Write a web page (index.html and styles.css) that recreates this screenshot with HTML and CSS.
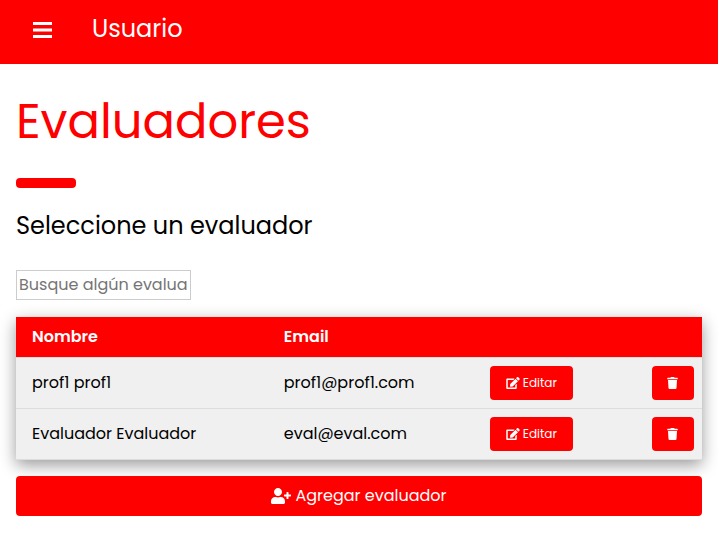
FILE: index.html
```html
<!DOCTYPE html>
<html lang="es">
<head>
<meta charset="utf-8">
<meta name="viewport" content="width=device-width, initial-scale=1">
<title>Evaluadores</title>
<link rel="stylesheet" href="styles.css">
</head>
<body>
<svg class="sprite" aria-hidden="true">
  <symbol id="edit" viewBox="0 0 576 512"><path d="M402.600 83.200l90.200 90.200c3.800 3.800 3.800 10 0 13.800L274.400 405.600l-92.800 10.300c-12.400 1.400-22.900-9.100-21.500-21.500l10.300-92.800L388.800 83.200c3.800-3.800 10-3.800 13.800 0zm162-22.900l-48.800-48.800c-15.200-15.200-39.900-15.200-55.200 0l-35.400 35.400c-3.800 3.800-3.800 10 0 13.800l90.200 90.200c3.800 3.800 10 3.800 13.800 0l35.400-35.400c15.200-15.300 15.200-40 0-55.200zM384 346.200V448H64V128h229.800c3.200 0 6.200-1.300 8.500-3.500l40-40c7.600-7.600 2.200-20.500-8.500-20.500H48C21.500 64 0 85.500 0 112v352c0 26.500 21.500 48 48 48h352c26.500 0 48-21.500 48-48V306.200c0-10.700-12.900-16-20.500-8.500l-40 40c-2.200 2.300-3.500 5.300-3.500 8.500z"/></symbol>
  <symbol id="trash" viewBox="0 0 448 512"><path d="M432 32H312l-9.400-18.700A24 24 0 0 0 281.100 0H166.800a23.700 23.700 0 0 0-21.400 13.300L136 32H16A16 16 0 0 0 0 48v32a16 16 0 0 0 16 16h416a16 16 0 0 0 16-16V48a16 16 0 0 0-16-16zM53.200 467a48 48 0 0 0 47.900 45h245.800a48 48 0 0 0 47.900-45L416 128H32z"/></symbol>
  <symbol id="user-plus" viewBox="0 0 640 512"><path d="M624 208h-64v-64c0-8.800-7.200-16-16-16h-32c-8.800 0-16 7.200-16 16v64h-64c-8.800 0-16 7.200-16 16v32c0 8.800 7.200 16 16 16h64v64c0 8.800 7.200 16 16 16h32c8.800 0 16-7.200 16-16v-64h64c8.800 0 16-7.200 16-16v-32c0-8.800-7.200-16-16-16zm-400 48c70.700 0 128-57.300 128-128S294.700 0 224 0 96 57.300 96 128s57.300 128 128 128zm89.600 32h-16.700c-22.200 10.200-46.900 16-72.900 16s-50.600-5.800-72.900-16h-16.700C60.200 288 0 348.200 0 422.400V464c0 26.500 21.500 48 48 48h352c26.500 0 48-21.500 48-48v-41.600c0-74.200-60.200-134.400-134.400-134.400z"/></symbol>
</svg>
<header class="topbar">
  <button class="menu" type="button" aria-label="Menú">
    <svg class="menu-icon" viewBox="0 0 19 16"><path d="M0 0h19v3H0zM0 6.500h19v3H0zM0 13h19v3H0z"/></svg>
  </button>
  <span class="brand">Usuario</span>
</header>
<main class="content">
  <h1 class="title">Evaluadores</h1>
  <hr class="rule">
  <label class="subtitle" for="search">Seleccione un evaluador</label>
  <input class="search" id="search" type="text" placeholder="Busque algún evaluador">
  <table class="people">
    <colgroup><col class="col-name"><col class="col-email"><col class="col-edit"><col></colgroup>
    <thead>
      <tr><th>Nombre</th><th>Email</th><th></th><th></th></tr>
    </thead>
    <tbody>
      <tr>
        <td>prof1 prof1</td>
        <td>prof1@prof1.com</td>
        <td class="action"><button class="btn edit" type="button"><svg class="edit-icon"><use href="#edit"/></svg>Editar</button></td>
        <td class="action"><button class="btn delete" type="button" aria-label="Eliminar"><svg class="trash-icon"><use href="#trash"/></svg></button></td>
      </tr>
      <tr>
        <td>Evaluador Evaluador</td>
        <td>eval@eval.com</td>
        <td class="action"><button class="btn edit" type="button"><svg class="edit-icon"><use href="#edit"/></svg>Editar</button></td>
        <td class="action"><button class="btn delete" type="button" aria-label="Eliminar"><svg class="trash-icon"><use href="#trash"/></svg></button></td>
      </tr>
    </tbody>
  </table>
  <button class="btn add" type="button"><svg class="user-icon"><use href="#user-plus"/></svg>Agregar evaluador</button>
</main>
</body>
</html>
```
FILE: styles.css
```css
* { box-sizing: border-box; }
body {
  margin: 0;
  background: #fff;
  color: #000;
  font: 16px/24px Poppins, Inter, "Liberation Sans", sans-serif;
}
button, input { font: inherit; }
svg { fill: currentColor; flex: none; }
.sprite { position: absolute; width: 0; height: 0; }

.topbar {
  display: flex;
  align-items: center;
  gap: 24px;
  height: 64px;
  padding: 0 16px 6px;
  background: #f00;
  color: #fff;
}
.menu {
  display: flex;
  padding: 11px 16px 9px 17px;
  border: 0;
  background: none;
  color: inherit;
}
.menu-icon { width: 19px; height: 16px; }
.brand { font-size: 24px; line-height: 36px; }

.content {
  display: flex;
  flex-direction: column;
  align-items: flex-start;
  padding: 20px 16px;
}
.title {
  margin: 0;
  color: #f00;
  font-size: 48px;
  font-weight: 400;
  line-height: 76px;
}
.rule {
  width: 60px;
  height: 10px;
  margin: 18px 0;
  border: 0;
  border-radius: 4px;
  background: #f00;
}
.subtitle { font-size: 24px; line-height: 40px; }
.search {
  width: 175px;
  height: 30px;
  margin: 24px 0 17px;
  padding: 0 2px 2px;
  border: 1px solid #ccc;
}
.search::placeholder { color: #757575; }

.people {
  width: 100%;
  margin-bottom: 16px;
  table-layout: fixed;
  border-spacing: 0;
  background: #f0f0f0;
  box-shadow: 0 5px 15px rgba(0, 0, 0, .4);
}
.col-name { width: 36.7%; }
.col-email { width: 31.2%; }
.col-edit { width: 23.6%; }
th {
  padding: 8px 16px;
  background: #f00;
  color: #fff;
  font-weight: 600;
  text-align: left;
}
td {
  padding: 8px 16px;
  border-top: 1px solid #ddd;
}
tbody tr:last-child td { border-bottom: 1px solid #ddd; }
td.action { padding: 8px; }

.btn {
  display: flex;
  align-items: center;
  justify-content: center;
  border: 0;
  border-radius: 4px;
  background: #f00;
  color: #fff;
}
.edit { gap: 3px; height: 34px; padding: 0 16px; font-size: 12px; }
.delete { width: 42px; height: 34px; padding: 0; }
.edit-icon { width: 14px; height: 12px; }
.trash-icon { width: 11px; height: 12px; }
.add { gap: 4px; width: 100%; height: 40px; }
.user-icon { width: 20px; height: 16px; }
```
